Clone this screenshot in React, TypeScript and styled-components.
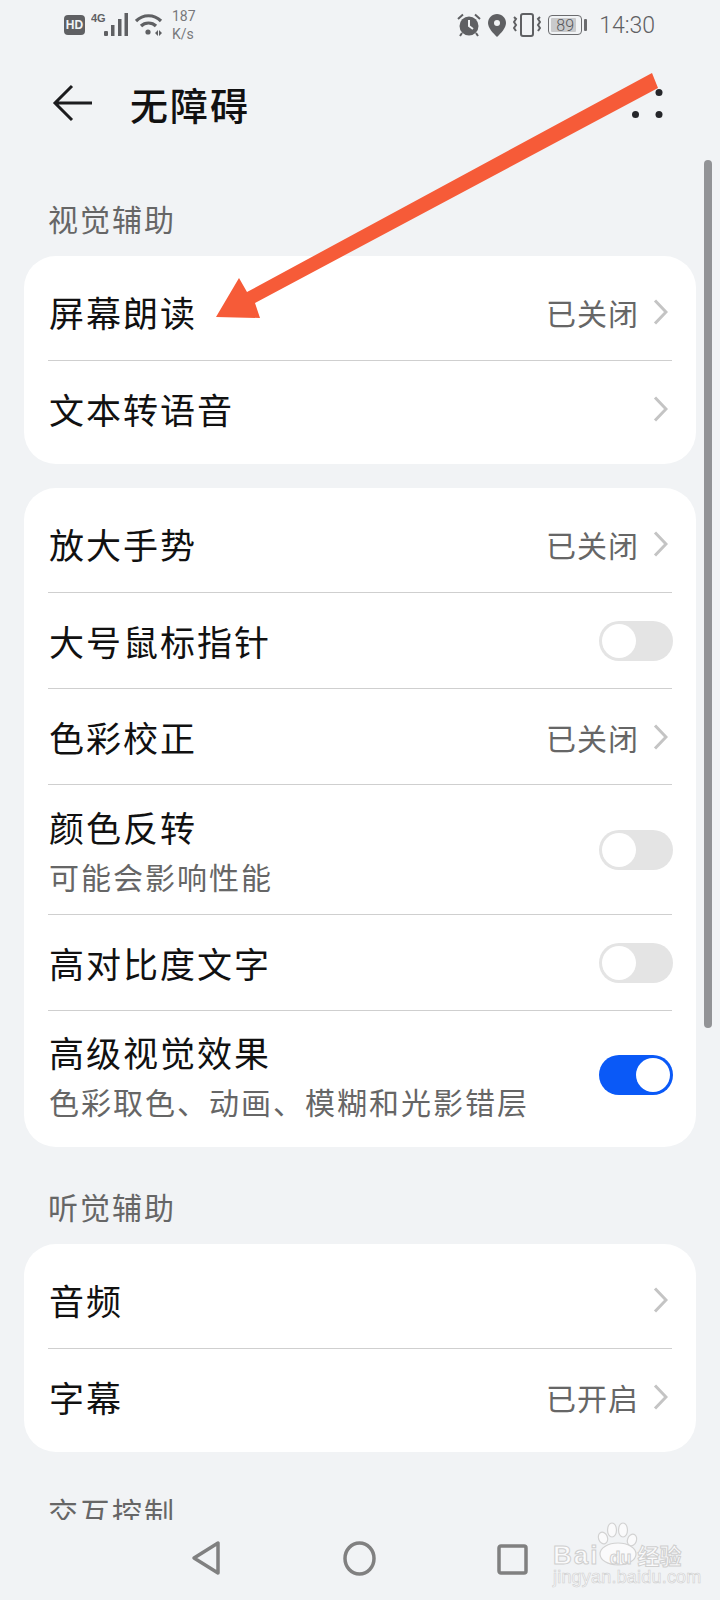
import React from 'react';
import styled, { createGlobalStyle } from 'styled-components';

const GlobalStyle = createGlobalStyle`
  html, body {
    margin: 0;
    padding: 0;
    background: #f1f3f5;
  }
`;

const App = () => {
  return (
    <Page>
      <GlobalStyle />
      <StatusBar>
        <StatusGroup>
          <HdBadge>HD</HdBadge>
          <SignalIcon />
          <WifiIcon />
          <Speed>
            <span>187</span>
            <span>K/s</span>
          </Speed>
        </StatusGroup>
        <StatusGroup $gap={7}>
          <AlarmIcon />
          <PinIcon />
          <VibrateIcon />
          <Battery>
            <BatteryBody>
              <BatteryFill />
              <BatteryText>89</BatteryText>
            </BatteryBody>
            <BatteryCap />
          </Battery>
          <Clock>14:30</Clock>
        </StatusGroup>
      </StatusBar>

      <Header>
        <BackSvg width="40" height="38" viewBox="0 0 40 38" fill="none" stroke="#1c1c1e" strokeWidth="3">
          <path d="M20 2 L3 19 L20 36 M3 19 H40" />
        </BackSvg>
        <Title>无障碍</Title>
        <MoreDots />
      </Header>

      <Scroller>
        <SectionLabel>视觉辅助</SectionLabel>
        <Card>
          <Row $h={104}>
            <RowText>屏幕朗读</RowText>
            <Value>已关闭</Value>
            <Chevron />
          </Row>
          <Row $h={104}>
            <RowText>文本转语音</RowText>
            <Chevron />
          </Row>
        </Card>

        <Card $top={24}>
          <Row $h={104}>
            <RowText>放大手势</RowText>
            <Value>已关闭</Value>
            <Chevron />
          </Row>
          <Row $h={96}>
            <RowText>大号鼠标指针</RowText>
            <Toggle />
          </Row>
          <Row $h={96}>
            <RowText>色彩校正</RowText>
            <Value>已关闭</Value>
            <Chevron />
          </Row>
          <Row $h={130}>
            <RowStack>
              <RowText>颜色反转</RowText>
              <SubText>可能会影响性能</SubText>
            </RowStack>
            <Toggle />
          </Row>
          <Row $h={96}>
            <RowText>高对比度文字</RowText>
            <Toggle />
          </Row>
          <Row $h={137}>
            <RowStack>
              <RowText>高级视觉效果</RowText>
              <SubText>色彩取色、动画、模糊和光影错层</SubText>
            </RowStack>
            <Toggle $on />
          </Row>
        </Card>

        <SectionLabel $top={35}>听觉辅助</SectionLabel>
        <Card>
          <Row $h={104}>
            <RowText>音频</RowText>
            <Chevron />
          </Row>
          <Row $h={104}>
            <RowText>字幕</RowText>
            <Value>已开启</Value>
            <Chevron />
          </Row>
        </Card>

        <SectionLabel $top={35}>交互控制</SectionLabel>
      </Scroller>

      <NavBar>
        <svg width="30" height="36" viewBox="0 0 30 36" fill="none" stroke="#808080" strokeWidth="3.5" strokeLinejoin="round">
          <path d="M27 3 V33 L3 18 Z" />
        </svg>
        <svg width="33" height="35" viewBox="0 0 33 35" fill="none" stroke="#808080" strokeWidth="3.5">
          <ellipse cx="16.5" cy="17.5" rx="14.5" ry="15.5" />
        </svg>
        <SquareSvg width="31" height="31" viewBox="0 0 31 31" fill="none" stroke="#808080" strokeWidth="3.5" strokeLinejoin="round">
          <rect x="2" y="2" width="27" height="27" rx="2" />
        </SquareSvg>
      </NavBar>

      <ScrollThumb />

      <ArrowMark width="720" height="400" viewBox="0 0 720 400">
        <polygon points="652,73 658,88 255,303 260,318 216,317 239,278 247,292" fill="#f65b38" />
      </ArrowMark>

      <Watermark>
        <PawIcon />
        <WatermarkBrand>
          <span>Bai</span>
          <WatermarkDu>du</WatermarkDu>
          <WatermarkCn>经验</WatermarkCn>
        </WatermarkBrand>
        <WatermarkUrl>jingyan.baidu.com</WatermarkUrl>
      </Watermark>
    </Page>
  );
};

export default App;

const SignalIcon = () => (
  <svg width="38" height="24" viewBox="0 0 38 24" fill="#5f6063">
    <text x="0" y="9" fontSize="11" fontWeight="700" fontFamily="'Liberation Sans', sans-serif">4G</text>
    <rect x="13" y="18" width="4" height="5" rx="1" />
    <rect x="20" y="12" width="3.5" height="11" />
    <rect x="27" y="6" width="3.5" height="17" />
    <rect x="33.5" y="0" width="3.5" height="23" />
  </svg>
);

const WifiIcon = () => (
  <svg width="28" height="24" viewBox="0 0 28 24" fill="none" stroke="#5f6063" strokeWidth="3.2">
    <path d="M1 8 C8 1 19 1 26 8" />
    <path d="M6 13 C10 9 17 9 21 13" />
    <circle cx="13" cy="19" r="2.6" fill="#5f6063" stroke="none" />
    <path d="M20 20 l3 -3 v6 z M24 17 l3 3 l-3 3 z" fill="#5f6063" stroke="none" />
  </svg>
);

const AlarmIcon = () => (
  <svg width="24" height="24" viewBox="0 0 24 24">
    <circle cx="12" cy="13" r="9.5" fill="#5f6063" />
    <path d="M12 7 V13 L16 16" fill="none" stroke="#f1f3f5" strokeWidth="2" />
    <path d="M1 6 L6 1.5 M23 6 L18 1.5 M5 20 L3 23 M19 20 L21 23" stroke="#5f6063" strokeWidth="2" />
  </svg>
);

const PinIcon = () => (
  <svg width="18" height="23" viewBox="0 0 18 23">
    <path d="M9 0 C14 0 18 4 18 9 C18 14 13 19 9 23 C5 19 0 14 0 9 C0 4 4 0 9 0 Z" fill="#5f6063" />
    <circle cx="9" cy="9" r="3" fill="#f1f3f5" />
  </svg>
);

const VibrateIcon = () => (
  <svg width="28" height="24" viewBox="0 0 28 24" fill="none" stroke="#5f6063" strokeWidth="2">
    <rect x="8" y="1" width="12" height="22" rx="2" />
    <path d="M1 4 l2 2 l-2 3 l2 3 l-2 3 l2 3" />
    <path d="M27 4 l-2 2 l2 3 l-2 3 l2 3 l-2 3" />
  </svg>
);

const MoreDots = () => (
  <DotsSvg width="31" height="29" viewBox="0 0 31 29" fill="#25262a">
    <circle cx="3.5" cy="3.5" r="3.5" />
    <circle cx="27" cy="3.5" r="3.5" />
    <circle cx="3.5" cy="25.5" r="3.5" />
    <circle cx="27" cy="25.5" r="3.5" />
  </DotsSvg>
);

const Chevron = () => (
  <ChevronSvg width="15" height="26" viewBox="0 0 15 26" fill="none" stroke="#c4c4c4" strokeWidth="3">
    <path d="M2 1.5 L13 13 L2 24.5" />
  </ChevronSvg>
);

const PawIcon = () => (
  <PawSvg width="50" height="44" viewBox="0 0 50 44" fill="#fafafb" stroke="#d2d2d2" strokeWidth="1.2">
    <ellipse cx="7" cy="16" rx="4.5" ry="6" transform="rotate(-20 7 16)" />
    <ellipse cx="16" cy="8" rx="4.5" ry="7" />
    <ellipse cx="27" cy="8" rx="4.5" ry="7" />
    <ellipse cx="36" cy="18" rx="4.5" ry="6" transform="rotate(20 36 18)" />
    <ellipse cx="22" cy="32" rx="18" ry="11" />
  </PawSvg>
);

const Page = styled.div`
  position: relative;
  width: 720px;
  height: 1600px;
  overflow: hidden;
  display: flex;
  flex-direction: column;
  background: #f1f3f5;
  font-family: 'Noto Sans CJK SC', sans-serif;
  color: #111;
`;

const StatusBar = styled.div`
  height: 50px;
  flex: none;
  padding: 0 65px 0 64px;
  display: flex;
  justify-content: space-between;
  align-items: center;
`;

const StatusGroup = styled.div<{ $gap?: number }>`
  display: flex;
  align-items: center;
  gap: ${(p) => p.$gap ?? 6}px;
`;

const HdBadge = styled.div`
  width: 21px;
  height: 20px;
  border-radius: 4px;
  background: #5f6063;
  color: #f1f3f5;
  font: 700 12px 'Liberation Sans', sans-serif;
  display: flex;
  align-items: center;
  justify-content: center;
`;

const Speed = styled.div`
  margin-left: 3px;
  display: flex;
  flex-direction: column;
  align-items: flex-start;
  font: 400 14px/18px 'Roboto', sans-serif;
  color: #77787b;
`;

const Battery = styled.div`
  display: flex;
  align-items: center;
  gap: 2px;
`;

const BatteryBody = styled.div`
  position: relative;
  width: 34px;
  height: 20px;
  box-sizing: border-box;
  border: 1.5px solid #6a6b6e;
  border-radius: 4px;
  display: flex;
  align-items: center;
  justify-content: center;
`;

const BatteryFill = styled.div`
  position: absolute;
  left: 2px;
  top: 2px;
  bottom: 2px;
  width: 25px;
  background: #c9cacc;
  border-radius: 1px;
`;

const BatteryText = styled.span`
  position: relative;
  font: 300 16px 'Roboto', sans-serif;
  color: #55565a;
`;

const BatteryCap = styled.div`
  width: 3px;
  height: 12px;
  background: #6a6b6e;
  border-radius: 1px;
`;

const Clock = styled.div`
  margin-left: 5px;
  font: 300 23px 'Roboto', sans-serif;
  color: #5f6063;
`;

const Header = styled.div`
  height: 110px;
  flex: none;
  padding: 0 57px 0 52px;
  display: flex;
  align-items: center;
  box-sizing: border-box;
`;

const BackSvg = styled.svg`
  margin-top: -4px;
`;

const Title = styled.h1`
  flex: 1;
  margin: -4px 0 0 38px;
  font-size: 38px;
  font-weight: 500;
  letter-spacing: 2px;
  color: #111;
`;

const DotsSvg = styled.svg`
  margin-top: -4px;
`;

const Scroller = styled.div`
  flex: 1;
  min-height: 0;
  overflow: hidden;
  padding: 0 24px;
`;

const SectionLabel = styled.div<{ $top?: number }>`
  height: 48px;
  margin: ${(p) => p.$top ?? 34}px 0 0;
  padding: 0 0 0 24px;
  display: flex;
  align-items: center;
  font-size: 30px;
  letter-spacing: 2px;
  color: #666;
`;

const Card = styled.div<{ $top?: number }>`
  margin-top: ${(p) => p.$top ?? 14}px;
  padding: 0 24px;
  background: #fff;
  border-radius: 32px;
`;

const Row = styled.div<{ $h: number }>`
  height: ${(p) => p.$h}px;
  box-sizing: border-box;
  display: flex;
  align-items: center;
  & + & {
    border-top: 1px solid #cfcfcf;
  }
  &:first-child {
    padding-top: 8px;
  }
  &:last-child {
    padding-bottom: 8px;
  }
`;

const RowStack = styled.div`
  flex: 1;
  min-width: 0;
  display: flex;
  flex-direction: column;
`;

const RowText = styled.div`
  flex: 1;
  margin-left: 1px;
  font-size: 35px;
  line-height: 46px;
  letter-spacing: 2px;
  color: #111;
  white-space: nowrap;
`;

const SubText = styled.div`
  margin: 6px 0 0 1px;
  font-size: 30px;
  line-height: 40px;
  letter-spacing: 2px;
  color: #666;
  white-space: nowrap;
`;

const Value = styled.div`
  font-size: 30px;
  letter-spacing: 1px;
  color: #666;
  margin-right: 14px;
`;

const ChevronSvg = styled.svg`
  margin-right: 4px;
`;

const Toggle = styled.div<{ $on?: boolean }>`
  position: relative;
  width: 74px;
  height: 40px;
  margin-right: -1px;
  border-radius: 20px;
  background: ${(p) => (p.$on ? '#0a59f7' : '#e4e4e4')};
  &::after {
    content: '';
    position: absolute;
    top: 3px;
    left: ${(p) => (p.$on ? '37px' : '3px')};
    width: 34px;
    height: 34px;
    border-radius: 50%;
    background: #fff;
  }
`;

const NavBar = styled.div`
  height: 80px;
  flex: none;
  padding: 0 192px 24px 191px;
  box-sizing: border-box;
  display: flex;
  justify-content: space-between;
  align-items: flex-end;
`;

const SquareSvg = styled.svg`
  margin-bottom: 1px;
`;

const ScrollThumb = styled.div`
  position: absolute;
  left: 704px;
  top: 160px;
  width: 8px;
  height: 868px;
  border-radius: 4px;
  background: #929396;
`;

const ArrowMark = styled.svg`
  position: absolute;
  left: 0;
  top: 0;
`;

const Watermark = styled.div`
  position: absolute;
  left: 553px;
  top: 1522px;
  width: 130px;
  height: 62px;
  color: #fafafb;
`;

const PawSvg = styled.svg`
  position: absolute;
  left: 43px;
  top: 0;
`;

const WatermarkBrand = styled.div`
  position: absolute;
  left: 0;
  top: 16px;
  width: 128px;
  display: flex;
  align-items: baseline;
  font: 700 26px 'Liberation Sans', sans-serif;
  letter-spacing: 2px;
  -webkit-text-stroke: 1px #cfcfcf;
  white-space: nowrap;
`;

const WatermarkDu = styled.span`
  margin-left: 10px;
  font-size: 18px;
  letter-spacing: 0;
`;

const WatermarkCn = styled.span`
  margin-left: 6px;
  font: 700 22px 'Noto Sans CJK SC', sans-serif;
  letter-spacing: 0;
`;

const WatermarkUrl = styled.div`
  position: absolute;
  left: 0;
  top: 45px;
  font: 400 18px 'Liberation Sans', sans-serif;
  letter-spacing: 0.2px;
  -webkit-text-stroke: 0.6px #cfcfcf;
  white-space: nowrap;
`;
